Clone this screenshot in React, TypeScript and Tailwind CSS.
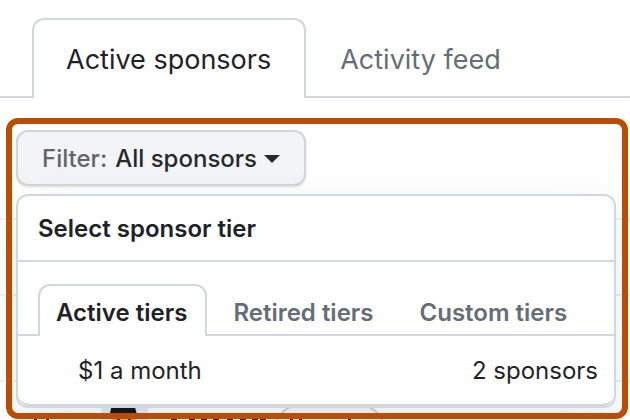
const line = "border-[#d0d7de]";

const tips = [34, 46, 171, 189, 201, 213, 227, 240, 252, 260, 290, 299, 348];

function BackgroundList() {
  return (
    <div className="absolute inset-0 overflow-hidden" aria-hidden="true">
      <div className="mt-[218px] h-[76px] border-t-2 border-[#eaeef2]" />
      <div className="h-[86px] border-t-2 border-[#eaeef2]" />
      <div className="border-t-2 border-[#eaeef2] pt-2">
        <svg className="h-12 w-[400px]" viewBox="0 0 400 48">
          <circle cx="125" cy="26" r="24" fill="#dfe7f5" />
          <path d="M112 14H134L138 28H109Z" fill="#000000" />
          <path d="M112 27H136V44H112Z" fill="#e09a80" />
          <path d="M117 26H120V44H117ZM128 26H131V44H128Z" fill="#4a2a22" />
          <rect x="275" y="15" width="109" height="50" rx="25" fill="#f6f7f9" stroke="#c4ccd4" strokeWidth="2" />
          {tips.map((x) => (
            <rect key={x} x={x} y="29" width={x > 160 && x < 270 ? 6 : 3} height="1" fill="#24292f" />
          ))}
        </svg>
      </div>
    </div>
  );
}

function SponsorTabs() {
  return (
    <nav className="relative flex h-20 px-8 text-[27px] leading-9" aria-label="Sponsors">
      <span className={`absolute inset-x-0 bottom-0 border-b-2 ${line}`} />
      <a href="#active" aria-current="page" className={`relative flex items-center rounded-t-xl border-2 border-b-0 ${line} bg-white pt-0.5 pr-[33px] pl-8 text-[#1f2328]`}>
        Active sponsors
      </a>
      <a href="#feed" className="relative flex items-center px-[34px] pt-1 text-[#656d76]">Activity feed</a>
    </nav>
  );
}

function TierMenu() {
  return (
    <section className={`mt-2 rounded-xl border-2 ${line} bg-white shadow-[0_16px_48px_rgba(140,149,159,0.2)]`}>
      <h2 className={`border-b-2 ${line} px-5 pt-[17px] pb-[15px] text-2xl leading-8 font-semibold`}>Select sponsor tier</h2>
      <div role="tablist" className="relative mt-[22px] flex h-[52px] px-5 text-2xl font-semibold text-[#656d76]">
        <span className={`absolute inset-x-0 bottom-0 border-b-2 ${line}`} />
        <button role="tab" aria-selected="true" className={`relative rounded-t-xl border-2 border-b-0 ${line} bg-white pt-1 pr-[18px] pl-4 text-[#1f2328]`}>Active tiers</button>
        <button role="tab" aria-selected="false" className="relative pt-1.5 pl-[26px]">Retired tiers</button>
        <button role="tab" aria-selected="false" className="relative pt-1.5 pl-[46px]">Custom tiers</button>
      </div>
      <a href="#tier" className={`flex h-[70px] items-center justify-between border-b-2 ${line} rounded-b-xl pt-0.5 pr-4 pl-[60px] text-2xl`}>
        <span>$1 a month</span>
        <span>2 sponsors</span>
      </a>
    </section>
  );
}

export default function App() {
  return (
    <main className="relative min-h-screen overflow-hidden bg-white pt-[18px] font-['Inter',sans-serif] text-[#1f2328]">
      <BackgroundList />
      <SponsorTabs />
      <div className="relative mt-5 mr-0.5 ml-1.5 overflow-hidden rounded-xl border-[6px] border-[#bc4c00] pt-1.5 pr-1.5 pb-[5px] pl-1">
        <button className="flex h-14 items-center rounded-xl border-2 border-[#d3d5d7] bg-[#f3f4f6] px-6 pt-0.5 text-2xl font-medium text-[#24292f] shadow-sm">
          <span className="text-[#62666a]">Filter:</span>
          <span className="ml-2">All sponsors</span>
          <svg className="ml-[7px] h-2 w-4" viewBox="0 0 16 8" fill="currentColor"><path d="M0 0H16L8 8Z" /></svg>
        </button>
        <TierMenu />
      </div>
    </main>
  );
}
